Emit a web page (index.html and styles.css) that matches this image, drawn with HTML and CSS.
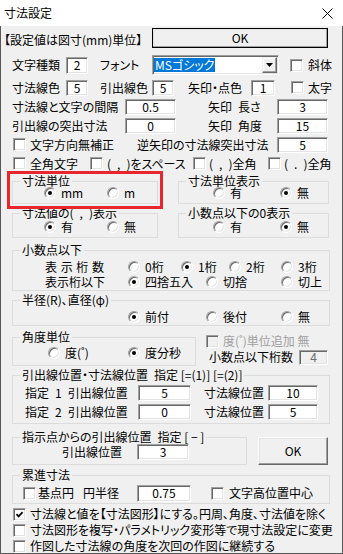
FILE: index.html
```html
<!DOCTYPE html>
<html lang="ja">
<head>
<meta charset="utf-8">
<title>寸法設定</title>
<link rel="stylesheet" href="styles.css">
</head>
<body>
<div class="win">
  <div class="titlebar">
    <span class="title">寸法設定</span>
    <svg class="close" width="11" height="11" viewBox="0 0 11 11"><path d="M0.5 0.5L10.5 10.5M10.5 0.5L0.5 10.5" stroke="#000" stroke-width="1" fill="none"/></svg>
  </div>
  <div class="client">
    <div class="row r1">
      <span class="lbl head">【設定値は図寸(mm)単位】</span>
      <button class="btn btn-def top-ok">OK</button>
    </div>
    <div class="row r2">
      <span class="lbl ml12 w54">文字種類</span>
      <span class="tb w22 h17">2</span>
      <span class="lbl ml12 w52">フォント</span>
      <span class="sel">
        <span class="sel-val"><span class="hi">MSゴシック</span></span>
        <span class="sel-btn"><svg width="7" height="4" viewBox="0 0 7 4"><path d="M0 0H7L3.5 4Z" fill="#000"/></svg></span>
      </span>
      <span class="cb ml11"></span>
      <span class="lbl ml5">斜体</span>
    </div>
    <div class="row r3">
      <span class="lbl ml12 w54">寸法線色</span>
      <span class="tb w22">5</span>
      <span class="lbl ml12 w52">引出線色</span>
      <span class="tb w22">5</span>
      <span class="lbl ml14 w63">矢印・点色</span>
      <span class="tb w24">1</span>
      <span class="cb ml16"></span>
      <span class="lbl ml4">太字</span>
    </div>
    <div class="row r4">
      <span class="lbl ml12 w113">寸法線と文字の間隔</span>
      <span class="tb w51">0.5</span>
      <span class="lbl ml32 w69">矢印&ensp;長さ</span>
      <span class="tb w51">3</span>
    </div>
    <div class="row r5">
      <span class="lbl ml12 w113">引出線の突出寸法</span>
      <span class="tb w51">0</span>
      <span class="lbl ml32 w69">矢印&ensp;角度</span>
      <span class="tb w51">15</span>
    </div>
    <div class="row r6">
      <span class="cb ml13"></span>
      <span class="lbl ml4 w107">文字方向無補正</span>
      <span class="lbl w140">逆矢印の寸法線突出寸法</span>
      <span class="tb w51">5</span>
    </div>
    <div class="row r7">
      <span class="cb ml13"></span>
      <span class="lbl ml4 w60">全角文字</span>
      <span class="cb"></span>
      <span class="lbl ml4 w86">(&ensp;,&ensp;)をスペース</span>
      <span class="cb"></span>
      <span class="lbl ml3 w59">(&ensp;,&ensp;)全角</span>
      <span class="cb"></span>
      <span class="lbl ml3">(&ensp;.&ensp;)全角</span>
    </div>

    <div class="grow gA">
      <div class="hl-wrap">
        <fieldset class="grp g-half-l">
          <legend>寸法単位</legend>
          <div class="opts pl31 h12">
            <label class="opt w63"><span class="rd on"></span>mm</label>
            <label class="opt"><span class="rd"></span>m</label>
          </div>
        </fieldset>
        <div class="hl"></div>
      </div>
      <fieldset class="grp g-half-r">
        <legend>寸法単位表示</legend>
        <div class="opts pl34 h12">
          <label class="opt w67"><span class="rd"></span>有</label>
          <label class="opt"><span class="rd on"></span>無</label>
        </div>
      </fieldset>
    </div>

    <div class="grow gB">
      <fieldset class="grp g-half-l">
        <legend>寸法値の(&ensp;,&ensp;)表示</legend>
        <div class="opts pl31 h16">
          <label class="opt w63"><span class="rd on"></span>有</label>
          <label class="opt"><span class="rd"></span>無</label>
        </div>
      </fieldset>
      <fieldset class="grp g-half-r">
        <legend>小数点以下の0表示</legend>
        <div class="opts pl34 h16">
          <label class="opt w67"><span class="rd"></span>有</label>
          <label class="opt"><span class="rd on"></span>無</label>
        </div>
      </fieldset>
    </div>

    <div class="grow gC">
      <fieldset class="grp g-full g-dec">
        <legend>小数点以下</legend>
        <div class="opts h14">
          <span class="lbl ml32 jlabel">表示桁数</span>
          <label class="opt ml24 w53"><span class="rd"></span>0桁</label>
          <label class="opt w48"><span class="rd on"></span>1桁</label>
          <label class="opt w52"><span class="rd"></span>2桁</label>
          <label class="opt"><span class="rd"></span>3桁</label>
        </div>
        <div class="opts h14 mt1">
          <span class="lbl ml32 jlabel">表示桁以下</span>
          <label class="opt ml24 w78"><span class="rd on"></span>四捨五入</label>
          <label class="opt w75"><span class="rd"></span>切捨</label>
          <label class="opt"><span class="rd"></span>切上</label>
        </div>
      </fieldset>
    </div>

    <div class="grow gD">
      <fieldset class="grp g-full g-rad">
        <legend>半径(R)、直径(φ)</legend>
        <div class="opts h14 pl115">
          <label class="opt w78"><span class="rd on"></span>前付</label>
          <label class="opt w75"><span class="rd"></span>後付</label>
          <label class="opt"><span class="rd"></span>無</label>
        </div>
      </fieldset>
    </div>

    <div class="grow gE">
      <fieldset class="grp g-ang">
        <legend>角度単位</legend>
        <div class="opts h14 pl35">
          <label class="opt w80"><span class="rd"></span>度(&#730;)</label>
          <label class="opt"><span class="rd on"></span>度分秒</label>
        </div>
      </fieldset>
      <div class="side">
        <div class="srow">
          <span class="cb dis ml10"></span>
          <span class="lbl ml4 dis-t">度(&#730;)単位追加 無</span>
        </div>
        <div class="srow">
          <span class="lbl ml13 w90">小数点以下桁数</span>
          <span class="tb dis w29 h15">4</span>
        </div>
      </div>
    </div>

    <div class="grow gF">
      <fieldset class="grp g-full g-pos">
        <legend>引出線位置・寸法線位置&ensp;指定 [=(1)] [=(2)]</legend>
        <div class="opts h18">
          <span class="lbl ml12 w113">指定&ensp;1&ensp;引出線位置</span>
          <span class="tb w53">5</span>
          <span class="lbl ml13 w64">寸法線位置</span>
          <span class="tb w50">10</span>
        </div>
        <div class="opts h19">
          <span class="lbl ml12 w113">指定&ensp;2&ensp;引出線位置</span>
          <span class="tb w53">0</span>
          <span class="lbl ml13 w64">寸法線位置</span>
          <span class="tb w50">5</span>
        </div>
      </fieldset>
    </div>

    <div class="grow gG">
      <fieldset class="grp g-pt">
        <legend>指示点からの引出線位置&ensp;指定 [ − ]</legend>
        <div class="opts h16">
          <span class="lbl ml49 w75">引出線位置</span>
          <span class="tb w52">3</span>
        </div>
      </fieldset>
      <button class="btn ok2">OK</button>
    </div>

    <div class="grow gH">
      <fieldset class="grp g-full g-cum">
        <legend>累進寸法</legend>
        <div class="opts h18">
          <span class="cb ml10"></span>
          <span class="lbl ml2 w45">基点円</span>
          <span class="lbl w54">円半径</span>
          <span class="tb w54 h17">0.75</span>
          <span class="cb ml20"></span>
          <span class="lbl ml5">文字高位置中心</span>
        </div>
      </fieldset>
    </div>

    <div class="checks">
      <div class="crow">
        <span class="cb on ml13"><svg width="9" height="9" viewBox="0 0 9 9"><path d="M1.5 4.2L3.6 6.4L7.6 2.2" stroke="#000" stroke-width="1.7" fill="none"/></svg></span>
        <span class="lbl ml4">寸法線と値を【寸法図形】にする。円周、角度、寸法値を除く</span>
      </div>
      <div class="crow">
        <span class="cb ml13"></span>
        <span class="lbl ml4">寸法図形を複写・パラメトリック変形等で現寸法設定に変更</span>
      </div>
      <div class="crow">
        <span class="cb ml13"></span>
        <span class="lbl ml4">作図した寸法線の角度を次回の作図に継続する</span>
      </div>
    </div>
  </div>
</div>
</body>
</html>
```

FILE: styles.css
```css
* { box-sizing: border-box; }
html, body { margin: 0; padding: 0; background: #f0f0f0; }

.win {
  width: 343px;
  height: 554px;
  background: #f0f0f0;
  color: #000;
  font-family: "Noto Sans CJK JP", "Noto Sans", sans-serif;
  font-size: 12px;
  line-height: 14px;
  font-feature-settings: "palt";
  overflow: hidden;
  box-shadow: inset 1px 0 0 #595959, inset -1px 0 0 #595959, inset 0 -1px 0 #595959;
}

.titlebar {
  height: 26px;
  background: #fff;
  display: flex;
  align-items: center;
  padding-left: 4px;
  padding-right: 10px;
  justify-content: space-between;
}
.title { font-size: 12px; line-height: 14px; }
.close { margin-top: 1px; }

.row { display: flex; align-items: center; white-space: nowrap; }
.r1 { height: 26px; align-items: flex-start; }
.r2 { height: 26px; }
.r3, .r4, .r5, .r6, .r7 { height: 19px; }

.lbl { white-space: nowrap; flex: none; }
.head { margin-left: 4px; width: 148px; margin-top: 7px; }

/* widths / margins */
.w22 { width: 22px; } .w24 { width: 24px; } .w29 { width: 29px; }
.w45 { width: 45px; } .w50 { width: 50px; } .w51 { width: 51px; }
.w52 { width: 52px; } .w53 { width: 53px; } .w54 { width: 54px; }
.w59 { width: 59px; } .w60 { width: 60px; } .w63 { width: 63px; }
.w64 { width: 64px; } .w67 { width: 67px; } .w69 { width: 69px; }
.w75 { width: 75px; } .w78 { width: 78px; } .w80 { width: 80px; }
.w48 { width: 48px; } .w86 { width: 86px; } .w90 { width: 90px; }
.w107 { width: 107px; } .w113 { width: 113px; } .w140 { width: 140px; }
.ml2 { margin-left: 2px; } .ml3 { margin-left: 3px; } .ml4 { margin-left: 4px; }
.ml5 { margin-left: 5px; } .ml10 { margin-left: 10px; } .ml11 { margin-left: 11px; }
.ml12 { margin-left: 12px; } .ml13 { margin-left: 13px; } .ml14 { margin-left: 14px; }
.ml16 { margin-left: 16px; } .ml20 { margin-left: 20px; } .ml24 { margin-left: 24px; }
.ml32 { margin-left: 32px; } .ml49 { margin-left: 49px; }
.mt1 { margin-top: 1px; }
.h12 { height: 12px; } .h14 { height: 14px; } .h15 { height: 15px; }
.h16 { height: 16px; } .h17 { height: 17px; } .h18 { height: 18px; } .h19 { height: 19px; }
.pl31 { padding-left: 31px; } .pl34 { padding-left: 34px; } .pl35 { padding-left: 35px; }
.pl115 { padding-left: 115px; }

/* text box */
.tb {
  flex: none;
  display: inline-flex;
  align-items: center;
  justify-content: center;
  height: 16px;
  background: #fff;
  border: 1px solid;
  border-color: #a0a0a0 #fff #fff #a0a0a0;
  box-shadow: inset 1px 1px 0 #696969, inset -1px -1px 0 #e3e3e3;
  line-height: 12px;
  font-feature-settings: normal;
}
.tb.h15 { height: 15px; }
.tb.h17 { height: 17px; }
.tb.dis { background: #f0f0f0; color: #6d6d6d; }

/* checkbox */
.cb {
  flex: none;
  width: 13px;
  height: 13px;
  background: #fff;
  border: 1px solid;
  border-color: #a0a0a0 #fff #fff #a0a0a0;
  box-shadow: inset 1px 1px 0 #696969, inset -1px -1px 0 #e3e3e3;
  display: inline-flex;
  align-items: center;
  justify-content: center;
}
.cb.dis { background: #f0f0f0; }
.dis-t { color: #a0a0a0; }

/* radio */
.rd {
  flex: none;
  width: 12px;
  height: 12px;
  border-radius: 50%;
  background: #fff;
  border: 1px solid;
  border-color: #a0a0a0 #fff #fff #a0a0a0;
  box-shadow: inset 1px 1px 0 #696969, inset -1px -1px 0 #e3e3e3;
  display: inline-flex;
  align-items: center;
  justify-content: center;
}
.rd.on::after {
  content: "";
  width: 4px;
  height: 4px;
  border-radius: 50%;
  background: #000;
}
.opt { display: flex; align-items: center; gap: 5px; white-space: nowrap; flex: none; line-height: 12px; }

/* buttons */
.btn {
  font: inherit;
  font-feature-settings: normal;
  color: #000;
  background: #f0f0f0;
  border: 1px solid;
  border-color: #fff #696969 #696969 #fff;
  box-shadow: inset -1px -1px 0 #a0a0a0, inset 1px 1px 0 #e3e3e3;
  padding: 0;
  flex: none;
}
.top-ok { width: 176px; height: 20px; margin-top: 2px; }
.btn-def { outline: 1px solid #000; outline-offset: -1px; border-color: #fff #696969 #696969 #fff; }
.ok2 { width: 70px; height: 28px; margin-left: 11px; margin-top: 6px; }

/* select */
.sel {
  flex: none;
  width: 127px;
  height: 20px;
  display: flex;
  align-items: stretch;
  background: #fff;
  border: 1px solid;
  border-color: #a0a0a0 #fff #fff #a0a0a0;
  box-shadow: inset 1px 1px 0 #696969, inset -1px -1px 0 #e3e3e3;
  padding: 1px;
}
.sel-val { flex: 1; display: flex; align-items: center; padding-left: 0; }
.hi {
  background: #0078d7;
  color: #fff;
  width: 61px;
  height: 14px;
  line-height: 14px;
  padding-left: 1px;
  margin-left: 0;
}
.sel-btn {
  width: 15px;
  display: flex;
  align-items: center;
  justify-content: center;
  background: #f0f0f0;
  border: 1px solid;
  border-color: #f0f0f0 #696969 #696969 #f0f0f0;
  box-shadow: inset -1px -1px 0 #a0a0a0, inset 1px 1px 0 #fff;
}

/* group boxes */
.grow { display: flex; padding-left: 12px; align-items: flex-start; }
.grp {
  margin: 0;
  padding: 0;
  border: 1px solid #dcdcdc;
  min-width: 0;
  flex: none;
}
.grp legend {
  margin-left: 7px;
  padding: 0 2px;
  line-height: 12px;
  white-space: nowrap;
}
.opts { display: flex; align-items: center; white-space: nowrap; line-height: 12px; }

.gA { margin-top: 2px; }
.g-half-l { width: 146px; }
.g-half-r { width: 151px; margin-left: 20px; }
.gA .grp { padding-bottom: 4px; }
.gB { margin-top: 3px; }
.gB .grp { padding-bottom: 2px; }

.hl-wrap { position: relative; flex: none; }
.hl {
  position: absolute;
  left: -5px;
  top: -4px;
  width: 156px;
  height: 38px;
  border: 3px solid #e8262d;
  pointer-events: none;
}

.g-full { width: 318px; }
.gC { margin-top: 6px; }
.g-dec { padding: 4px 0 1px; }
.jlabel { width: 59px; text-align: justify; text-align-last: justify; }
.gD { margin-top: 3px; }
.g-rad { padding: 4px 0 1px; }
.gE { margin-top: 5px; }
.g-ang { width: 184px; padding: 3px 0 5px; }
.side { display: flex; flex-direction: column; gap: 2px; padding-top: 3px; }
.srow { display: flex; align-items: center; height: 14px; white-space: nowrap; }
.gF { margin-top: 3px; }
.g-pos { padding: 3px 0 2px; }
.gG { margin-top: 7px; }
.g-pt { width: 235px; padding: 1px 0 4px; }
.gH { margin-top: 4px; }
.g-cum { padding: 3px 0 1px; }

.checks { margin-top: 2px; }
.crow { display: flex; align-items: center; height: 16px; white-space: nowrap; }
```
